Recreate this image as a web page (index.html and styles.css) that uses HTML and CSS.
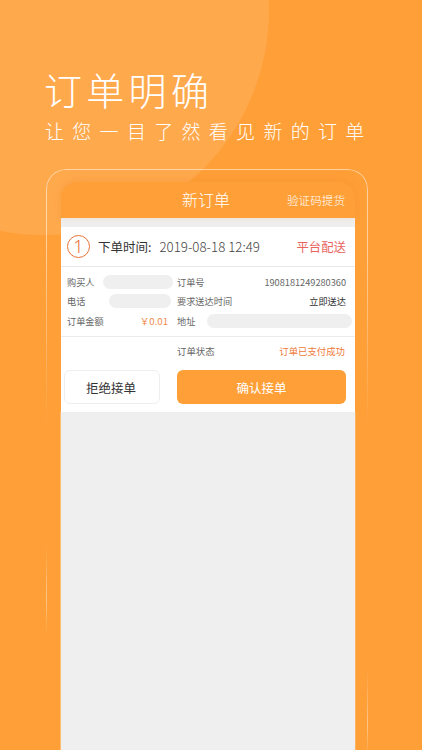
FILE: index.html
```html
<!DOCTYPE html>
<html lang="zh">
<head>
<meta charset="utf-8">
<title>订单明确</title>
<link rel="stylesheet" href="styles.css">
</head>
<body>
<main class="poster">
  <div class="blob"></div>
  <header class="intro">
    <h1 class="title">订单明确</h1>
    <p class="subtitle">让您一目了然看见新的订单</p>
  </header>
  <div class="device">
    <div class="frame"></div>
    <div class="glint glint-left"></div>
    <div class="glint glint-right"></div>
    <section class="screen">
      <div class="nav">
        <span class="nav-title">新订单</span>
        <span class="nav-action">验证码提货</span>
      </div>
      <div class="gap"></div>
      <div class="card">
        <div class="order-head">
          <span class="num">1</span>
          <span class="time"><span class="time-label">下单时间:</span>2019-08-18 12:49</span>
          <span class="delivery">平台配送</span>
        </div>
        <div class="info">
          <div class="col-left">
            <div class="row"><span>购买人</span><i class="mask mask-buyer"></i></div>
            <div class="row"><span>电话</span><i class="mask mask-phone"></i></div>
            <div class="row"><span>订单金额</span><span class="money">￥0.01</span></div>
          </div>
          <div class="col-right">
            <div class="row"><span>订单号</span><span>1908181249280360</span></div>
            <div class="row"><span>要求送达时间</span><span class="dark">立即送达</span></div>
            <div class="row"><span>地址</span><i class="mask mask-addr"></i></div>
          </div>
        </div>
        <div class="status"><span>订单状态</span><span class="paid">订单已支付成功</span></div>
        <div class="actions">
          <button class="btn reject">拒绝接单</button>
          <button class="btn accept">确认接单</button>
        </div>
      </div>
      <div class="empty"></div>
    </section>
  </div>
</main>
</body>
</html>
```
FILE: styles.css
```css
* { box-sizing: border-box; }
html, body { margin: 0; padding: 0; }
body {
  width: 422px;
  height: 750px;
  overflow: hidden;
  font-family: "Noto Sans CJK SC", "Noto Sans", sans-serif;
}
.poster {
  position: relative;
  width: 422px;
  height: 750px;
  overflow: hidden;
  background: #ff9f38;
  padding: 65px 0 0 45px;
}
.blob {
  position: absolute;
  left: -181px;
  top: -215px;
  width: 450px;
  height: 450px;
  border-radius: 50%;
  background: rgba(255, 255, 255, .11);
}
.intro { position: relative; color: #fff; }
.title {
  margin: 0 0 0 -1px;
  font-size: 38px;
  line-height: 48px;
  font-weight: 300;
  letter-spacing: 4.3px;
}
.subtitle {
  margin: 4px 0 0;
  font-size: 19px;
  line-height: 28px;
  font-weight: 300;
  letter-spacing: 8.3px;
  white-space: nowrap;
}
.device {
  position: relative;
  margin: 24px 0 0 1px;
  padding: 13px 0 0 15px;
  width: 321px;
}
.frame {
  position: absolute;
  left: -.5px;
  top: 0;
  width: 322px;
  height: 260px;
  border: 1px solid rgba(255, 255, 255, .5);
  border-bottom: 0;
  border-radius: 20px 20px 0 0;
  -webkit-mask-image: linear-gradient(#000 30%, transparent);
  mask-image: linear-gradient(#000 30%, transparent);
}
.glint {
  position: absolute;
  width: 1px;
  background: linear-gradient(transparent, rgba(255, 255, 255, .4) 60%, transparent);
}
.glint-left { left: -.5px; top: 375px; height: 90px; }
.glint-right { left: 320.5px; top: 500px; height: 90px; }
.screen {
  position: relative;
  width: 294px;
  height: 570px;
  border-radius: 16px 16px 0 0;
}
.nav {
  position: relative;
  height: 36px;
  background: #ff9f38;
  border-radius: 16px 16px 0 0;
  box-shadow: 0 -2px 8px rgba(230, 130, 30, .25);
  color: #fff;
  display: flex;
  justify-content: flex-end;
  align-items: center;
  padding-right: 10px;
}
.nav-title {
  position: absolute;
  left: 121px;
  top: 6px;
  font-size: 16px;
  line-height: 22px;
  font-weight: 300;
}
.nav-action { font-size: 11.6px; line-height: 34px; font-weight: 300; }
.gap { height: 9px; background: #efefef; }
.card { background: #fff; color: #666; }
.order-head {
  height: 40px;
  display: flex;
  align-items: center;
  padding: 0 9px 0 6px;
  border-bottom: 1px solid #e8e8e8;
}
.num {
  width: 23px;
  height: 23px;
  border: 1px solid #e8723a;
  border-radius: 50%;
  color: #e8723a;
  font-family: "Noto Sans", sans-serif;
  font-size: 18px;
  font-weight: 300;
  line-height: 21px;
  text-align: center;
}
.time { margin-left: 8px; font-size: 13.3px; font-weight: 300; color: #444; flex: 1; white-space: nowrap; }
.time-label { color: #333; margin-right: 8px; font-size: 12.5px; font-weight: 400; }
.delivery { font-size: 12.4px; color: #e8655f; }
.info {
  display: flex;
  height: 70px;
  padding: 5px 3px 0 6px;
  border-bottom: 1px solid #ececec;
  font-size: 9.2px;
}
.col-left { width: 101px; margin-right: 9px; }
.col-right { flex: 1; }
.row {
  height: 19.5px;
  display: flex;
  justify-content: space-between;
  align-items: center;
  white-space: nowrap;
}
.mask { display: block; height: 14px; border-radius: 7px; background: #efefef; }
.mask-buyer { width: 70px; margin-right: -5px; }
.mask-phone { width: 62px; margin-right: -3px; }
.mask-addr { width: 145px; }
.dark { color: #333; }
.money { color: #f08a4b; font-size: 9.6px; }
.col-right .row:first-child span:last-child,
.col-right .row:nth-child(2) span:last-child { margin-right: 6px; }
.status {
  display: flex;
  justify-content: space-between;
  align-items: center;
  height: 28px;
  margin-left: 116px;
  padding: 0 10px 0 0;
  font-size: 9.4px;
}
.paid { color: #ef7a3a; }
.actions {
  display: flex;
  justify-content: space-between;
  padding: 5px 9px 8px 3px;
}
.btn {
  height: 34px;
  border-radius: 6px;
  font-family: inherit;
  font-size: 12.5px;
  padding: 0;
}
.reject { width: 96px; padding-right: 2px; background: #fff; border: 1px solid #eee; color: #333; }
.accept { width: 169px; background: #ff9f38; border: 0; color: #fff; }
.empty {
  height: 340px;
  background: #efefef;
  box-shadow: -1px 0 0 rgba(255, 255, 255, .3), 1px 0 0 rgba(255, 255, 255, .2);
}
```
